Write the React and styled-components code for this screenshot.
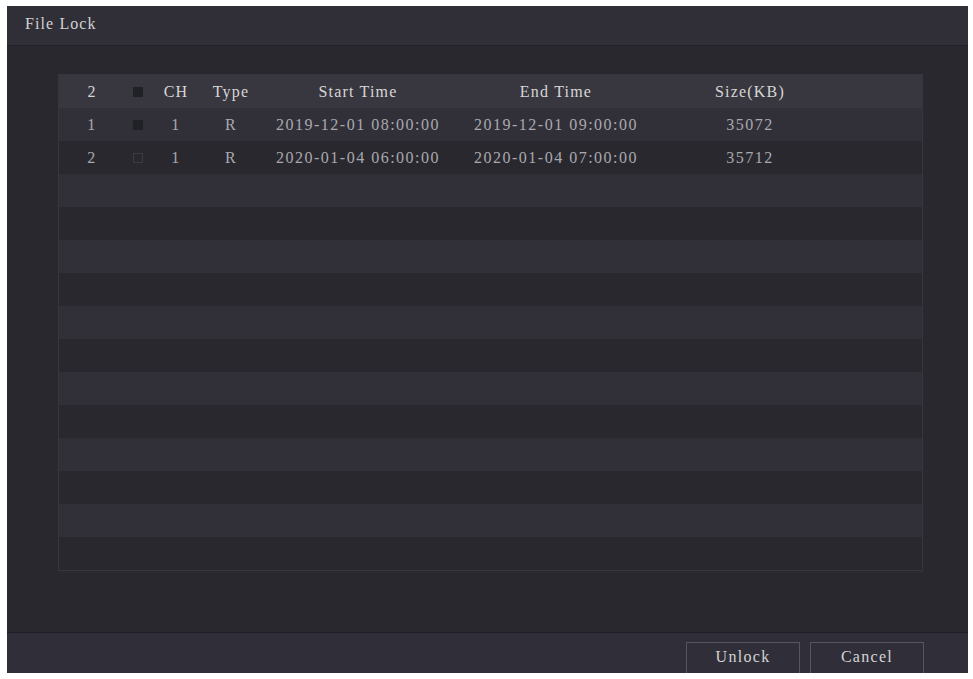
import React from "react";
import styled, { createGlobalStyle } from "styled-components";

const GlobalStyle = createGlobalStyle`
  html, body {
    margin: 0;
    padding: 0;
    background: #ffffff;
  }
  body {
    font-family: "Liberation Serif", "Times New Roman", serif;
  }
`;

const files = [
  { no: 1, checked: true, ch: 1, type: "R", start: "2019-12-01 08:00:00", end: "2019-12-01 09:00:00", size: "35072" },
  { no: 2, checked: false, ch: 1, type: "R", start: "2020-01-04 06:00:00", end: "2020-01-04 07:00:00", size: "35712" },
];

const ROWS = 14;

const App = () => {
  const rows = Array.from({ length: ROWS }, (_, i) => files[i] || null);
  return (
    <>
      <GlobalStyle />
      <StWindow>
        <StTitleBar>File Lock</StTitleBar>
        <StBody>
          <StTable>
            <StHeadRow>
              <StCell>{files.length}</StCell>
              <StCell><StCheck filled /></StCell>
              <StCell>CH</StCell>
              <StCell>Type</StCell>
              <StCell>Start Time</StCell>
              <StCell>End Time</StCell>
              <StCell>Size(KB)</StCell>
              <StCell />
            </StHeadRow>
            {rows.map((r, i) => (
              <StRow key={i} odd={i % 2 === 0}>
                {r ? (
                  <>
                    <StCell>{r.no}</StCell>
                    <StCell><StCheck filled={r.checked} /></StCell>
                    <StCell>{r.ch}</StCell>
                    <StCell>{r.type}</StCell>
                    <StCell>{r.start}</StCell>
                    <StCell>{r.end}</StCell>
                    <StCell>{r.size}</StCell>
                    <StCell />
                  </>
                ) : null}
              </StRow>
            ))}
          </StTable>
          <StTableEdge />
        </StBody>
        <StFooter>
          <StBtn>Unlock</StBtn>
          <StBtn>Cancel</StBtn>
        </StFooter>
      </StWindow>
    </>
  );
};

export default App;

// 창 전체
const StWindow = styled.div`
  margin: 6px 0 0 7px;
  width: 961px;
  height: 667px;
  display: flex;
  flex-direction: column;
  background-color: #29282f;
  overflow: hidden;
`;

const StTitleBar = styled.div`
  height: 40px;
  flex: none;
  display: flex;
  align-items: center;
  padding-left: 18px;
  box-sizing: border-box;
  padding-bottom: 3px;
  background-color: #302f37;
  border-bottom: 1px solid #222128;
  color: #d2d2d2;
  font-size: 16px;
  letter-spacing: 1.1px;
`;

const StBody = styled.div`
  flex: 1;
  padding: 28px 45px 0 51px;
`;

const StTable = styled.div`
  border: 1px solid #37363f;
  display: flex;
  flex-direction: column;
`;

// 표 아래 점선
const StTableEdge = styled.div`
  margin: 1px 0 0 4px;
  border-top: 1px dotted #34333b;
`;

const COLS = "66px 26px 50px 60px 194px 202px 186px 1fr";

const StHeadRow = styled.div`
  display: grid;
  grid-template-columns: ${COLS};
  height: 33px;
  background-color: #38373f;
  color: #d6d6d6;
  font-size: 16px;
  letter-spacing: 1.2px;
`;

const StRow = styled.div`
  display: grid;
  grid-template-columns: ${COLS};
  height: 33px;
  background-color: ${(p) => (p.odd ? "#313039" : "#29282f")};
  color: #a9a9ae;
  font-size: 16px;
  letter-spacing: 1.5px;
`;

const StCell = styled.div`
  display: flex;
  align-items: center;
  justify-content: center;
  white-space: nowrap;
`;

const StCheck = styled.span`
  width: 10px;
  height: 10px;
  box-sizing: border-box;
  background-color: ${(p) => (p.filled ? "#202027" : "transparent")};
  border: 1px solid ${(p) => (p.filled ? "#202027" : "#3c3b44")};
`;

const StFooter = styled.div`
  height: 41px;
  flex: none;
  display: flex;
  justify-content: flex-end;
  align-items: flex-start;
  gap: 10px;
  padding: 9px 44px 0 0;
  box-sizing: border-box;
  background-color: #302f39;
  border-top: 1px solid #1f1e25;
`;

const StBtn = styled.button`
  width: 114px;
  height: 32px;
  background-color: #302f39;
  border: 1px solid #575660;
  color: #d4d4d4;
  font-family: "Liberation Serif", "Times New Roman", serif;
  font-size: 16px;
  letter-spacing: 1.3px;
  padding: 0 0 3px 0;
`;
